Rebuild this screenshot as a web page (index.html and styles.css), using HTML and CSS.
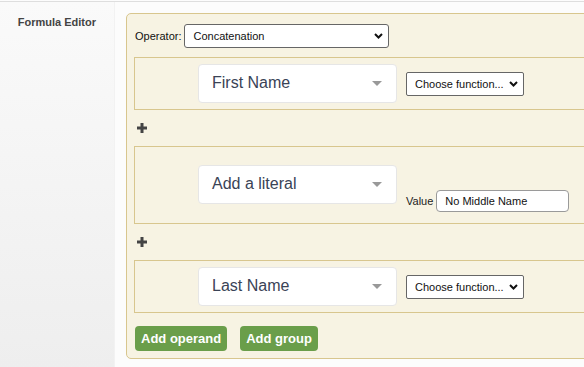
FILE: index.html
```html
<!DOCTYPE html>
<html lang="en">
<head>
  <meta charset="UTF-8">
  <meta name="viewport" content="width=device-width, initial-scale=1.0">
  <title>Formula Editor</title>
  <link rel="stylesheet" href="styles.css">
</head>
<body>
  <div class="form-row">
    <div class="form-label">Formula Editor</div>
    <div class="form-field">
      <div class="formula-panel">
        <div class="operator-row">
          <label for="operator">Operator:</label>
          <div class="select-wrap operator-select">
            <select id="operator">
              <option>Concatenation</option>
            </select>
            <svg class="chevron" width="9" height="6" viewBox="0 0 9 6"><path d="M1 1 L4.5 4.5 L8 1" fill="none" stroke="#111" stroke-width="2"/></svg>
          </div>
        </div>

        <div class="operand">
          <div class="field-picker">
            <span>First Name</span>
            <svg class="caret" width="10" height="5" viewBox="0 0 10 5"><path d="M0 0 H10 L5 5 Z" fill="#999"/></svg>
          </div>
          <div class="select-wrap function-select">
            <select>
              <option>Choose function...</option>
            </select>
            <svg class="chevron" width="9" height="6" viewBox="0 0 9 6"><path d="M1 1 L4.5 4.5 L8 1" fill="none" stroke="#111" stroke-width="2"/></svg>
          </div>
        </div>

        <div class="plus-row">
          <svg width="10" height="10" viewBox="0 0 10 10"><path d="M3.5 0 H6.5 V3.5 H10 V6.5 H6.5 V10 H3.5 V6.5 H0 V3.5 H3.5 Z" fill="#444"/></svg>
        </div>

        <div class="operand operand-literal">
          <div class="field-picker">
            <span>Add a literal</span>
            <svg class="caret" width="10" height="5" viewBox="0 0 10 5"><path d="M0 0 H10 L5 5 Z" fill="#999"/></svg>
          </div>
          <div class="literal-value">
            <label for="literal">Value</label>
            <input id="literal" type="text" value="No Middle Name">
          </div>
        </div>

        <div class="plus-row">
          <svg width="10" height="10" viewBox="0 0 10 10"><path d="M3.5 0 H6.5 V3.5 H10 V6.5 H6.5 V10 H3.5 V6.5 H0 V3.5 H3.5 Z" fill="#444"/></svg>
        </div>

        <div class="operand">
          <div class="field-picker">
            <span>Last Name</span>
            <svg class="caret" width="10" height="5" viewBox="0 0 10 5"><path d="M0 0 H10 L5 5 Z" fill="#999"/></svg>
          </div>
          <div class="select-wrap function-select">
            <select>
              <option>Choose function...</option>
            </select>
            <svg class="chevron" width="9" height="6" viewBox="0 0 9 6"><path d="M1 1 L4.5 4.5 L8 1" fill="none" stroke="#111" stroke-width="2"/></svg>
          </div>
        </div>

        <div class="button-row">
          <button class="btn">Add operand</button>
          <button class="btn">Add group</button>
        </div>
      </div>
    </div>
  </div>
</body>
</html>
```

FILE: styles.css
```css
body {
  font-family: "Liberation Sans", Arial, sans-serif;
  margin: 0;
  overflow: hidden;
  background-color: #fcfcfc;
}
.form-row {
  display: flex;
  margin-top: 1px;
  border-top: 1px solid #dedede;
  height: 366px;
}
.form-label {
  width: 115px;
  flex-shrink: 0;
  box-sizing: border-box;
  padding: 14px 18px 0 0;
  text-align: right;
  font-size: 11px;
  font-weight: bold;
  color: #444;
  background: linear-gradient(#fafafa, #eeeeee);
  border-right: 1px solid #f2f2f2;
}
.form-field {
  padding: 11px 0 0 11px;
}
.formula-panel {
  width: 500px;
  padding: 10px 0 7px 7px;
  background-color: #f7f3e3;
  border: 1px solid #d8c68e;
  border-radius: 5px;
}
.operator-row {
  display: flex;
  align-items: center;
  gap: 3px;
  margin-left: 1px;
  margin-bottom: 9px;
  font-size: 11px;
  color: #111;
}
.select-wrap {
  position: relative;
}
.select-wrap select {
  appearance: none;
  display: block;
  box-sizing: border-box;
  height: 24px;
  background-color: #fff;
  border: 1px solid #666;
  border-radius: 3px;
  font-family: inherit;
  font-size: 11px;
  color: #111;
}
.select-wrap .chevron {
  position: absolute;
  right: 6px;
  top: 9px;
  pointer-events: none;
}
.operator-select select {
  width: 205px;
  padding-left: 8px;
}
.function-select select {
  width: 118px;
  padding-left: 8px;
  border-radius: 2px;
}
.operand {
  display: flex;
  align-items: center;
  gap: 9px;
  padding: 6px 0 6px 63px;
  border: 1px solid #d8c68e;
  border-right: none;
}
.operand-literal {
  align-items: flex-end;
  padding: 18px 0 11px 63px;
}
.operand-literal .field-picker {
  margin-bottom: 8px;
}
.field-picker {
  display: flex;
  align-items: center;
  justify-content: space-between;
  box-sizing: border-box;
  width: 199px;
  height: 39px;
  padding: 0 14px 0 13px;
  background-color: #fff;
  border: 1px solid #e6e6e6;
  border-radius: 4px;
  font-size: 16px;
  color: #3a4356;
}
.field-picker span {
  margin-top: -1px;
}
.literal-value {
  display: flex;
  align-items: center;
  gap: 3px;
  font-size: 11px;
  color: #222;
}
.literal-value input {
  box-sizing: border-box;
  width: 133px;
  height: 22px;
  padding: 0 8px;
  border: 1px solid #9a9a9a;
  border-radius: 4px;
  font-family: inherit;
  font-size: 11px;
  color: #111;
}
.plus-row {
  display: flex;
  align-items: center;
  height: 36px;
  margin-left: 3px;
}
.button-row {
  display: flex;
  gap: 13px;
  margin: 13px 0 0 1px;
}
.btn {
  height: 25px;
  padding: 0 6px;
  background-color: #6a9e4a;
  color: #fff;
  border: none;
  border-radius: 4px;
  font-family: inherit;
  font-size: 13px;
  font-weight: bold;
  cursor: pointer;
}
```
